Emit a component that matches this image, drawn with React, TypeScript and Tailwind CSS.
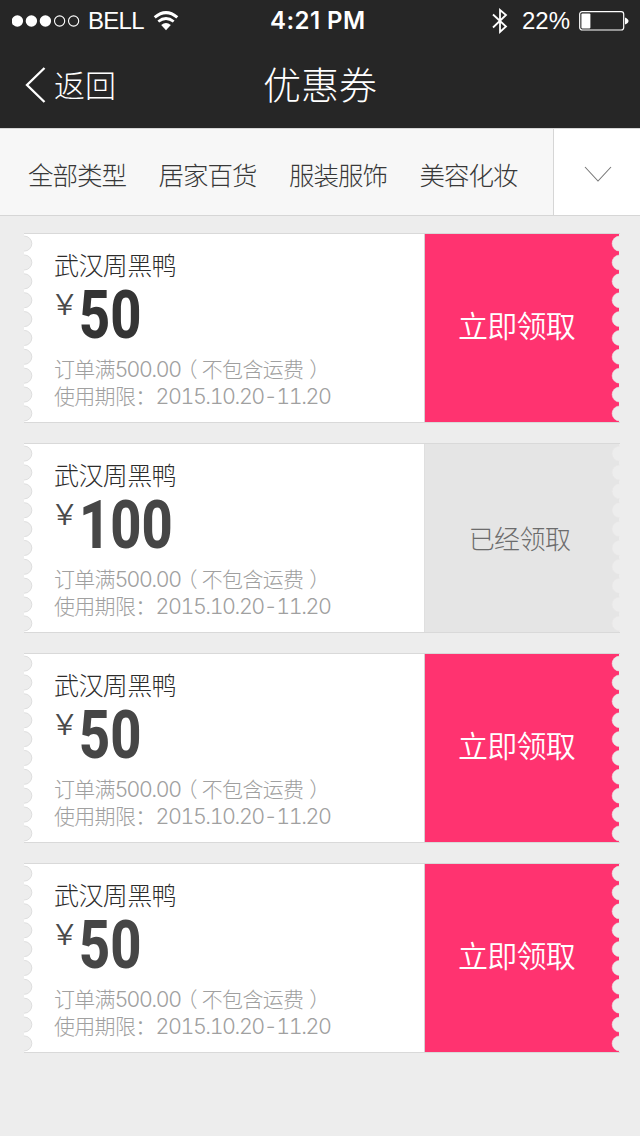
import React from 'react';

const tabs = ['全部类型', '居家百货', '服装服饰', '美容化妆'];

type Coupon = { amount: string; claimed: boolean; tone: string };

const coupons: Coupon[] = [
  { amount: '50', claimed: false, tone: 'text-[#343434]' },
  { amount: '100', claimed: true, tone: 'text-[#464646]' },
  { amount: '50', claimed: false, tone: 'text-[#464646]' },
  { amount: '50', claimed: false, tone: 'text-[#464646]' },
];

const notches = Array.from({ length: 10 }, (_, i) => 9.6 + i * 18.87);

function Perforation({ side }: { side: 'left' | 'right' }) {
  const left = side === 'left';
  return (
    <svg
      className={left ? 'absolute top-0 left-0' : 'absolute top-0 right-0'}
      width="9"
      height="188"
      viewBox="0 0 9 188"
    >
      {!left && <rect x="8" y="0" width="1" height="188" fill="#ededed" />}
      {notches.map((y) => (
        <circle
          key={y}
          cx={left ? 0.3 : 8.6}
          cy={y}
          r="7.5"
          fill="#ededed"
          stroke={left ? '#dedede' : '#e9e6e7'}
          strokeWidth={left ? 1 : 0.5}
        />
      ))}
    </svg>
  );
}

function StatusBar() {
  return (
    <div className="flex h-10 items-center pt-px text-white">
      <svg className="ml-3" width="68" height="14" viewBox="0 0 68 14">
        {[5.4, 19.4, 33.4].map((x) => (
          <circle key={x} cx={x} cy="7" r="5.7" fill="white" />
        ))}
        {[47.6, 61.6].map((x) => (
          <circle key={x} cx={x} cy="7" r="5.1" fill="none" stroke="white" strokeWidth="1.1" />
        ))}
      </svg>
      <span className="ml-[8px] w-[60px] font-['Liberation_Sans'] text-[24px] leading-[40px] tracking-[-0.7px] whitespace-nowrap">
        BELL
      </span>
      <svg className="ml-[5px]" width="26" height="20" viewBox="0 0 26 20" fill="none">
        <path d="M1.7 6.4 Q13 -3.2 24.3 6.4" stroke="white" strokeWidth="3" />
        <path d="M5.3 10.5 Q13 4.5 20.7 10.5" stroke="white" strokeWidth="2.7" />
        <path d="M8.2 14 Q13 10 17.8 14 L13 19.2Z" fill="white" />
      </svg>
      <span className="ml-[91px] w-[98px] font-['Inter'] text-[24px] leading-[40px] font-semibold tracking-[0.45px] whitespace-nowrap">
        4:21 PM
      </span>
      <svg className="ml-[124px]" width="16" height="28" viewBox="0 0 16 28" fill="none">
        <path d="M1 7.5 L14 19.5 L8 25 V3 L14 8 L1 20.5" stroke="white" strokeWidth="1.8" />
      </svg>
      <span className="ml-[14px] w-[49px] font-['Liberation_Sans'] text-[24px] leading-[40px] whitespace-nowrap">
        22%
      </span>
      <svg className="ml-[8px]" width="50" height="20" viewBox="0 0 50 20">
        <rect x="0.7" y="0.7" width="44" height="18.3" rx="2.5" fill="none" stroke="white" strokeWidth="1.2" />
        <rect x="2.4" y="2.4" width="9" height="15" rx="1" fill="white" />
        <path d="M46 6.5 Q49.5 8 49.5 10 Q49.5 12 46 13.5Z" fill="white" />
      </svg>
    </div>
  );
}

function CouponCard({ amount, claimed, tone }: Coupon) {
  return (
    <article className="relative flex h-[190px] border-y border-[#d9d9d9] bg-white">
      <div className="w-[400px] shrink-0 pt-[12px] pl-[30px]">
        <h2 className="h-[36px] text-[25px] leading-[36px] font-light tracking-[-0.6px] text-[#2c2c2c]">武汉周黑鸭</h2>
        <div className="flex h-[73px]">
          <span className="mr-[6px] w-[19px] origin-left scale-x-[1.2] pl-px font-['Inter'] text-[29px] leading-[45px] font-light text-[#4a4a4a]">
            ¥
          </span>
          <span
            className={`origin-left scale-x-[0.82] font-['Roboto'] text-[66px] leading-[67px] font-extrabold ${tone}`}
          >
            {amount}
          </span>
        </div>
        <p className="flex h-[27px] text-[21px] leading-[27px] font-light tracking-[-0.7px] whitespace-nowrap text-[#a0a0a0]">
          <span>订单满</span>
          <span className="pt-px font-['Inter'] text-[21.5px] tracking-[-0.8px]">500.00</span>
          <span className="ml-[6px] [font-feature-settings:'halt']">（</span>
          <span className="ml-[5px]">不包含运费</span>
          <span className="ml-[6px] [font-feature-settings:'halt']">）</span>
        </p>
        <p className="flex h-[27px] text-[21px] leading-[27px] font-light tracking-[-0.7px] whitespace-nowrap text-[#a0a0a0]">
          <span>使用期限：</span>
          <span className="pt-px font-['Inter'] text-[21.5px] tracking-[-1.45px] tabular-nums">2015.10.20-11.20</span>
        </p>
      </div>
      {claimed ? (
        <div className="flex flex-1 items-center justify-center border-l border-[#dfdfdf] bg-[#e5e5e5] pr-[6px] pb-[2px] text-[26px] font-light tracking-[-0.6px] text-[#6c6c6c]">
          已经领取
        </div>
      ) : (
        <button className="flex flex-1 items-center justify-center border-l border-[#d8cfd2] bg-[#ff3370] pr-[12px] pb-[7px] text-[30px] font-[350] tracking-[-0.8px] text-white">
          立即领取
        </button>
      )}
      <Perforation side="left" />
      <Perforation side="right" />
    </article>
  );
}

export default function App() {
  return (
    <div className="h-[1136px] w-[640px] overflow-hidden bg-[#ededed] font-['Noto_Sans_CJK_SC',sans-serif]">
      <header className="h-32 bg-[#262626] text-white">
        <StatusBar />
        <div className="flex h-[88px]">
          <a className="flex w-[200px] pl-6">
            <svg className="mt-[26px]" width="24" height="38" viewBox="0 0 24 38" fill="none">
              <path d="M20.5 2 L3 19 L20.5 36" stroke="white" strokeWidth="2.3" />
            </svg>
            <span className="ml-[6px] text-[31px] leading-[87px] font-light">返回</span>
          </a>
          <h1 className="w-[240px] text-center text-[38px] leading-[85px] font-light">优惠券</h1>
        </div>
      </header>
      <nav className="flex h-[88px] border-y border-[#d6d6d6] bg-[#f7f7f7]">
        <div className="flex w-[553px] gap-[32px] pl-7">
          {tabs.map((t) => (
            <span
              key={t}
              className="w-[98.5px] text-[25.5px] leading-[89px] font-light tracking-[-1px] whitespace-nowrap text-[#383838]"
            >
              {t}
            </span>
          ))}
        </div>
        <button className="flex flex-1 items-center justify-center border-l border-[#d6d6d6] bg-white pt-[4px] pl-[2px]">
          <svg width="28" height="18" viewBox="0 0 28 18" fill="none">
            <path d="M1 2 L14 16 L27 2" stroke="#777777" strokeWidth="1.1" />
          </svg>
        </button>
      </nav>
      <main className="flex flex-col gap-5 pt-[17px] pr-5 pl-6">
        {coupons.map((c, i) => (
          <CouponCard key={i} {...c} />
        ))}
      </main>
    </div>
  );
}
